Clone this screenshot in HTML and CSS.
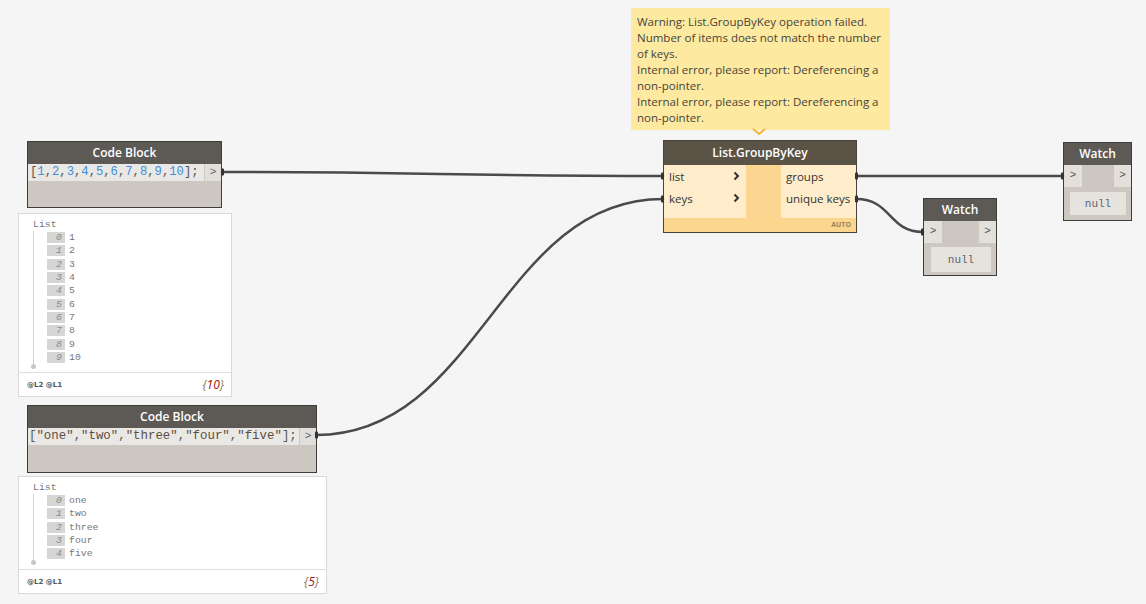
FILE: index.html
```html
<!DOCTYPE html>
<html>
<head>
<meta charset="utf-8">
<link rel="stylesheet" href="styles.css">
</head>
<body>
<div class="canvas">

  <div class="tooltip">
    Warning: List.GroupByKey operation failed.<br>
    Number of items does not match the number<br>
    of keys.<br>
    Internal error, please report: Dereferencing a<br>
    non-pointer.<br>
    Internal error, please report: Dereferencing a<br>
    non-pointer.
  </div>
  <svg class="tip-arrow" width="14" height="8" viewBox="0 0 14 8"><polyline points="1,1 7,6 13,1" fill="none" stroke="#f3b53a" stroke-width="2"/></svg>

  <div class="node cb cb1">
    <div class="node-head">Code Block</div>
    <div class="cb-row">
      <div class="cb-code"><span class="p">[</span><span class="n">1</span><span class="p">,</span><span class="n">2</span><span class="p">,</span><span class="n">3</span><span class="p">,</span><span class="n">4</span><span class="p">,</span><span class="n">5</span><span class="p">,</span><span class="n">6</span><span class="p">,</span><span class="n">7</span><span class="p">,</span><span class="n">8</span><span class="p">,</span><span class="n">9</span><span class="p">,</span><span class="n">10</span><span class="p">];</span></div>
      <div class="port-box">&gt;</div>
    </div>
    <div class="cb-body"></div>
  </div>

  <div class="preview pv1">
    <div class="pv-body">
      <div class="pv-title">List</div>
      <div class="pv-items">
        <div class="pv-row"><span class="idx">0</span><span class="val">1</span></div>
        <div class="pv-row"><span class="idx">1</span><span class="val">2</span></div>
        <div class="pv-row"><span class="idx">2</span><span class="val">3</span></div>
        <div class="pv-row"><span class="idx">3</span><span class="val">4</span></div>
        <div class="pv-row"><span class="idx">4</span><span class="val">5</span></div>
        <div class="pv-row"><span class="idx">5</span><span class="val">6</span></div>
        <div class="pv-row"><span class="idx">6</span><span class="val">7</span></div>
        <div class="pv-row"><span class="idx">7</span><span class="val">8</span></div>
        <div class="pv-row"><span class="idx">8</span><span class="val">9</span></div>
        <div class="pv-row"><span class="idx">9</span><span class="val">10</span></div>
      </div>
    </div>
    <div class="pv-foot"><span class="levels">@L2 @L1</span><span class="count">{<b>10</b>}</span></div>
  </div>

  <div class="node cb cb2">
    <div class="node-head">Code Block</div>
    <div class="cb-row">
      <div class="cb-code"><span class="p">[</span><span class="s">"one"</span><span class="p">,</span><span class="s">"two"</span><span class="p">,</span><span class="s">"three"</span><span class="p">,</span><span class="s">"four"</span><span class="p">,</span><span class="s">"five"</span><span class="p">];</span></div>
      <div class="port-box">&gt;</div>
    </div>
    <div class="cb-body"></div>
  </div>

  <div class="preview pv2">
    <div class="pv-body">
      <div class="pv-title">List</div>
      <div class="pv-items">
        <div class="pv-row"><span class="idx">0</span><span class="val">one</span></div>
        <div class="pv-row"><span class="idx">1</span><span class="val">two</span></div>
        <div class="pv-row"><span class="idx">2</span><span class="val">three</span></div>
        <div class="pv-row"><span class="idx">3</span><span class="val">four</span></div>
        <div class="pv-row"><span class="idx">4</span><span class="val">five</span></div>
      </div>
    </div>
    <div class="pv-foot"><span class="levels">@L2 @L1</span><span class="count">{<b>5</b>}</span></div>
  </div>

  <div class="node gbk">
    <div class="node-head gbk-head">List.GroupByKey</div>
    <div class="gbk-main">
      <div class="gbk-in">
        <div class="gbk-port">list<svg class="chev" width="7" height="10" viewBox="0 0 7 10"><polyline points="1.5,1.5 5,5 1.5,8.5" fill="none" stroke="#333" stroke-width="2"/></svg></div>
        <div class="gbk-port">keys<svg class="chev" width="7" height="10" viewBox="0 0 7 10"><polyline points="1.5,1.5 5,5 1.5,8.5" fill="none" stroke="#333" stroke-width="2"/></svg></div>
      </div>
      <div class="gbk-mid"></div>
      <div class="gbk-out">
        <div class="gbk-port">groups</div>
        <div class="gbk-port">unique keys</div>
      </div>
    </div>
    <div class="gbk-foot">AUTO</div>
  </div>

  <div class="node watch w1">
    <div class="node-head">Watch</div>
    <div class="w-ports">
      <div class="w-port w-left">&gt;</div>
      <div class="w-gap"></div>
      <div class="w-port w-right">&gt;</div>
    </div>
    <div class="w-body"><div class="w-null">null</div></div>
  </div>

  <div class="node watch w2">
    <div class="node-head">Watch</div>
    <div class="w-ports">
      <div class="w-port w-left">&gt;</div>
      <div class="w-gap"></div>
      <div class="w-port w-right">&gt;</div>
    </div>
    <div class="w-body"><div class="w-null">null</div></div>
  </div>

  <svg class="wires" width="1146" height="604" viewBox="0 0 1146 604">
    <g fill="none" stroke="#4a4a4a" stroke-width="2.5" stroke-linecap="round">
      <path d="M222,172 C420,172 460,176 663,176"/>
      <path d="M316,435 C480,435 500,199 663,199"/>
      <path d="M856,176 C960,176 960,176 1063,176"/>
      <path d="M856,199 C892,199 888,232 923,232"/>
    </g>
    <g fill="#333">
      <rect x="221" y="168.5" width="3" height="7" rx="1"/>
      <rect x="315" y="431.5" width="3" height="7" rx="1"/>
      <rect x="661" y="172.5" width="3" height="7" rx="1"/>
      <rect x="661" y="195.5" width="3" height="7" rx="1"/>
      <rect x="855" y="172.5" width="3" height="7" rx="1"/>
      <rect x="855" y="195.5" width="3" height="7" rx="1"/>
      <rect x="921" y="228.5" width="3" height="7" rx="1"/>
      <rect x="1061" y="172.5" width="3" height="7" rx="1"/>
    </g>
  </svg>
</div>
</body>
</html>
```

FILE: styles.css
```css
html, body {
  margin: 0;
  padding: 0;
}
body {
  background: #f5f5f5;
  font-family: "Open Sans", "Liberation Sans", sans-serif;
}
.canvas {
  position: relative;
  width: 1146px;
  height: 604px;
  overflow: hidden;
  background: #f5f5f5;
}

/* tooltip */
.tooltip {
  position: absolute;
  left: 631px;
  top: 8px;
  width: 259px;
  height: 122px;
  box-sizing: border-box;
  padding: 6px 0 0 6px;
  background: #fee9a1;
  color: #45443a;
  font-size: 11.5px;
  line-height: 16px;
  white-space: nowrap;
}
.tip-arrow {
  position: absolute;
  left: 752px;
  top: 128px;
}

/* generic node */
.node {
  position: absolute;
  box-sizing: border-box;
  border: 1px solid #3f3d3a;
  display: flex;
  flex-direction: column;
}
.node-head {
  flex: none;
  height: 22px;
  line-height: 22px;
  background: #5d5a56;
  color: #fff;
  font-weight: 600;
  font-size: 12px;
  text-align: center;
}

/* code blocks */
.cb1 { left: 27px; top: 141px; width: 195px; height: 67px; }
.cb2 { left: 27px; top: 405px; width: 290px; height: 68px; }
.cb-row {
  flex: none;
  display: flex;
  height: 17px;
  background: #eae8e4;
}
.cb-code {
  flex: 1;
  padding-left: 2px;
  font-family: "Liberation Mono", "DejaVu Sans Mono", monospace;
  font-size: 12.2px;
  line-height: 17px;
  white-space: nowrap;
  overflow: hidden;
}
.cb2 .cb-code { font-size: 12.4px; padding-left: 1px; }
.cb-code .p { color: #555; }
.cb-code .n { color: #3f8edc; }
.cb-code .s { color: #5b4f45; }
.port-box {
  flex: none;
  width: 16px;
  border-left: 1px solid #cdc9c2;
  background: #e2dfda;
  color: #5a6678;
  font-family: "Liberation Mono", monospace;
  font-size: 11px;
  line-height: 17px;
  text-align: center;
}
.cb-body {
  flex: 1;
  background: #ccc8c1;
}

/* previews */
.preview {
  position: absolute;
  box-sizing: border-box;
  border: 1px solid #d9d9d9;
  background: #fff;
  display: flex;
  flex-direction: column;
}
.pv1 { left: 18px; top: 213px; width: 214px; height: 184px; }
.pv2 { left: 18px; top: 476px; width: 309px; height: 118px; }
.pv-body {
  flex: 1;
  padding: 5px 0 0 14px;
  font-family: "Liberation Mono", "DejaVu Sans Mono", monospace;
  font-size: 9.8px;
  color: #7a7a7a;
}
.pv-title {
  line-height: 12px;
  color: #777;
}
.pv-items {
  position: relative;
  border-left: 1px solid #d4d4d4;
  padding-left: 13px;
  padding-bottom: 2px;
}
.pv-items::after {
  content: "";
  position: absolute;
  left: -3px;
  bottom: -3px;
  width: 5px;
  height: 5px;
  border-radius: 50%;
  background: #c8c8c8;
}
.pv-row {
  display: flex;
  align-items: center;
  height: 13.3px;
}
.idx {
  width: 18px;
  height: 11px;
  line-height: 11px;
  box-sizing: border-box;
  padding-right: 3px;
  text-align: right;
  background: #d6d6d6;
  color: #8a8a8a;
  font-style: italic;
}
.val {
  margin-left: 4px;
  color: #777;
}
.pv-foot {
  flex: none;
  height: 23px;
  border-top: 1px solid #dedede;
  display: flex;
  align-items: center;
  justify-content: space-between;
  padding: 0 7px 0 8px;
}
.levels {
  font-family: "DejaVu Sans", sans-serif;
  font-size: 7px;
  font-weight: bold;
  color: #555;
}
.count {
  font-family: "Open Sans", sans-serif;
  font-style: italic;
  font-size: 12px;
  color: #8a7a55;
}
.count b {
  font-weight: normal;
  color: #a01010;
}

/* GroupByKey */
.gbk {
  left: 663px;
  top: 140px;
  width: 194px;
  height: 93px;
  border-color: #4a4338;
  background: #fbd68f;
}
.gbk-head {
  height: 24px;
  line-height: 24px;
  background: #5b5346;
}
.gbk-main {
  flex: none;
  display: flex;
  height: 53px;
}
.gbk-in {
  box-sizing: border-box;
  width: 82px;
  background: #feecca;
  padding-left: 5px;
  padding-right: 6px;
}
.gbk-mid {
  width: 35px;
  background: #fcd690;
}
.gbk-out {
  flex: 1;
  background: #feecca;
  padding-left: 5px;
}
.gbk-port {
  display: flex;
  align-items: center;
  justify-content: space-between;
  height: 22px;
  font-size: 11.5px;
  color: #333;
  white-space: nowrap;
}
.gbk-foot {
  flex: 1;
  text-align: right;
  padding-right: 5px;
  font-size: 7px;
  font-weight: bold;
  color: #9a8560;
  line-height: 14px;
}

/* Watch */
.w1 { left: 923px; top: 198px; width: 74px; height: 78px; }
.w2 { left: 1063px; top: 142px; width: 69px; height: 79px; }
.watch { background: #ccc8c1; }
.w-ports {
  flex: none;
  display: flex;
  height: 22px;
}
.w-port {
  width: 18px;
  background: #e3e0db;
  color: #555;
  font-family: "Liberation Mono", monospace;
  font-size: 11px;
  line-height: 20px;
  text-align: center;
}
.w-right { width: 17px; }
.w-gap { flex: 1; }
.w-body {
  flex: 1;
  padding: 4px 5px 3px 7px;
  display: flex;
}
.w-null {
  flex: 1;
  background: #e6e3de;
  color: #5a6370;
  font-family: "Liberation Mono", monospace;
  font-size: 11px;
  display: flex;
  align-items: center;
  justify-content: center;
}
.w2 .w-body { padding: 5px 5px 5px 6px; }

/* wires */
.wires {
  position: absolute;
  left: 0;
  top: 0;
  pointer-events: none;
}
```
